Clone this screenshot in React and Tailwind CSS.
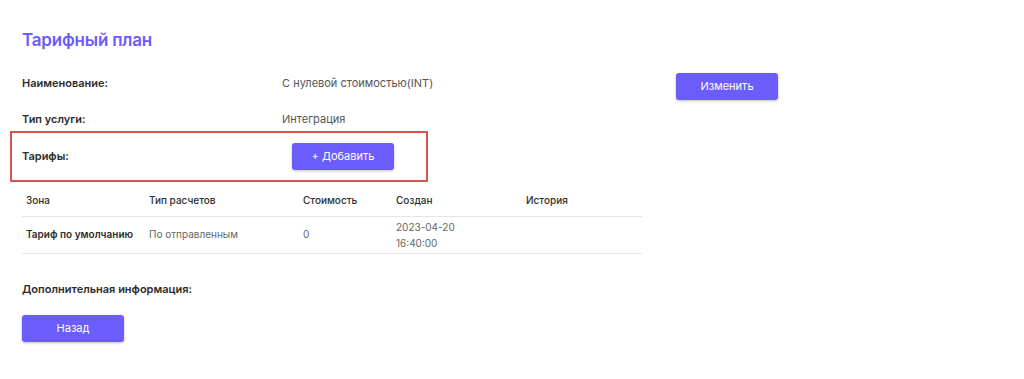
export default function App() {
  const btn =
    "h-[27px] w-[102px] rounded-[3px] bg-[#6b5cfd] text-white text-[11px] shadow-[0_1px_3px_rgba(0,0,0,0.25)] flex items-center justify-center";
  return (
    <div className="w-[1024px] h-[379px] bg-white font-['Inter',sans-serif] text-[#2d2d2d] relative">
      <div className="pl-[22px] pt-[29px]">
        <h1 className="text-[17px] leading-[22px] font-semibold text-[#6b5cfd] tracking-[-0.2px]">Тарифный план</h1>

        <div className="mt-[19px] flex items-center h-[26px]">
          <div className="w-[260px] text-[11px] font-semibold">Наименование:</div>
          <div className="w-[394px] text-[11px] text-[#555]">С нулевой стоимостью(INT)</div>
          <button className={btn + " mt-[6px]"}>Изменить</button>
        </div>

        <div className="mt-[13px] flex items-center h-[20px]">
          <div className="w-[260px] text-[11px] font-semibold">Тип услуги:</div>
          <div className="text-[11px] text-[#555]">Интеграция</div>
        </div>

        <div className="-ml-[12px] mt-[2px] w-[418px] h-[51px] border-2 border-[#d9534f] flex items-center">
          <div className="pl-[10px] w-[280px] text-[11px] font-semibold">Тарифы:</div>
          <button className={btn}>+ Добавить</button>
        </div>

        <table className="mt-[1px] w-[620px] text-[10px] border-collapse">
          <thead>
            <tr className="h-[33px] border-b border-[#e6e6e6] text-left">
              <th className="pl-[4px] w-[127px] font-medium pt-[2px]">Зона</th>
              <th className="w-[154px] font-medium pt-[2px]">Тип расчетов</th>
              <th className="w-[93px] font-medium pt-[2px]">Стоимость</th>
              <th className="w-[130px] font-medium pt-[2px]">Создан</th>
              <th className="font-medium pt-[2px]">История</th>
            </tr>
          </thead>
          <tbody>
            <tr className="h-[37px] border-b border-[#e6e6e6]">
              <td className="pl-[4px] font-semibold">Тариф по умолчанию</td>
              <td className="text-[#666]">По отправленным</td>
              <td className="text-[#666]">0</td>
              <td className="text-[#666] leading-[16px]">
                2023-04-20
                <br />
                16:40:00
              </td>
              <td></td>
            </tr>
          </tbody>
        </table>

        <div className="mt-[27px] text-[11px] font-semibold leading-[16px]">Дополнительная информация:</div>

        <button className={btn + " mt-[18px]"}>Назад</button>
      </div>
    </div>
  );
}
